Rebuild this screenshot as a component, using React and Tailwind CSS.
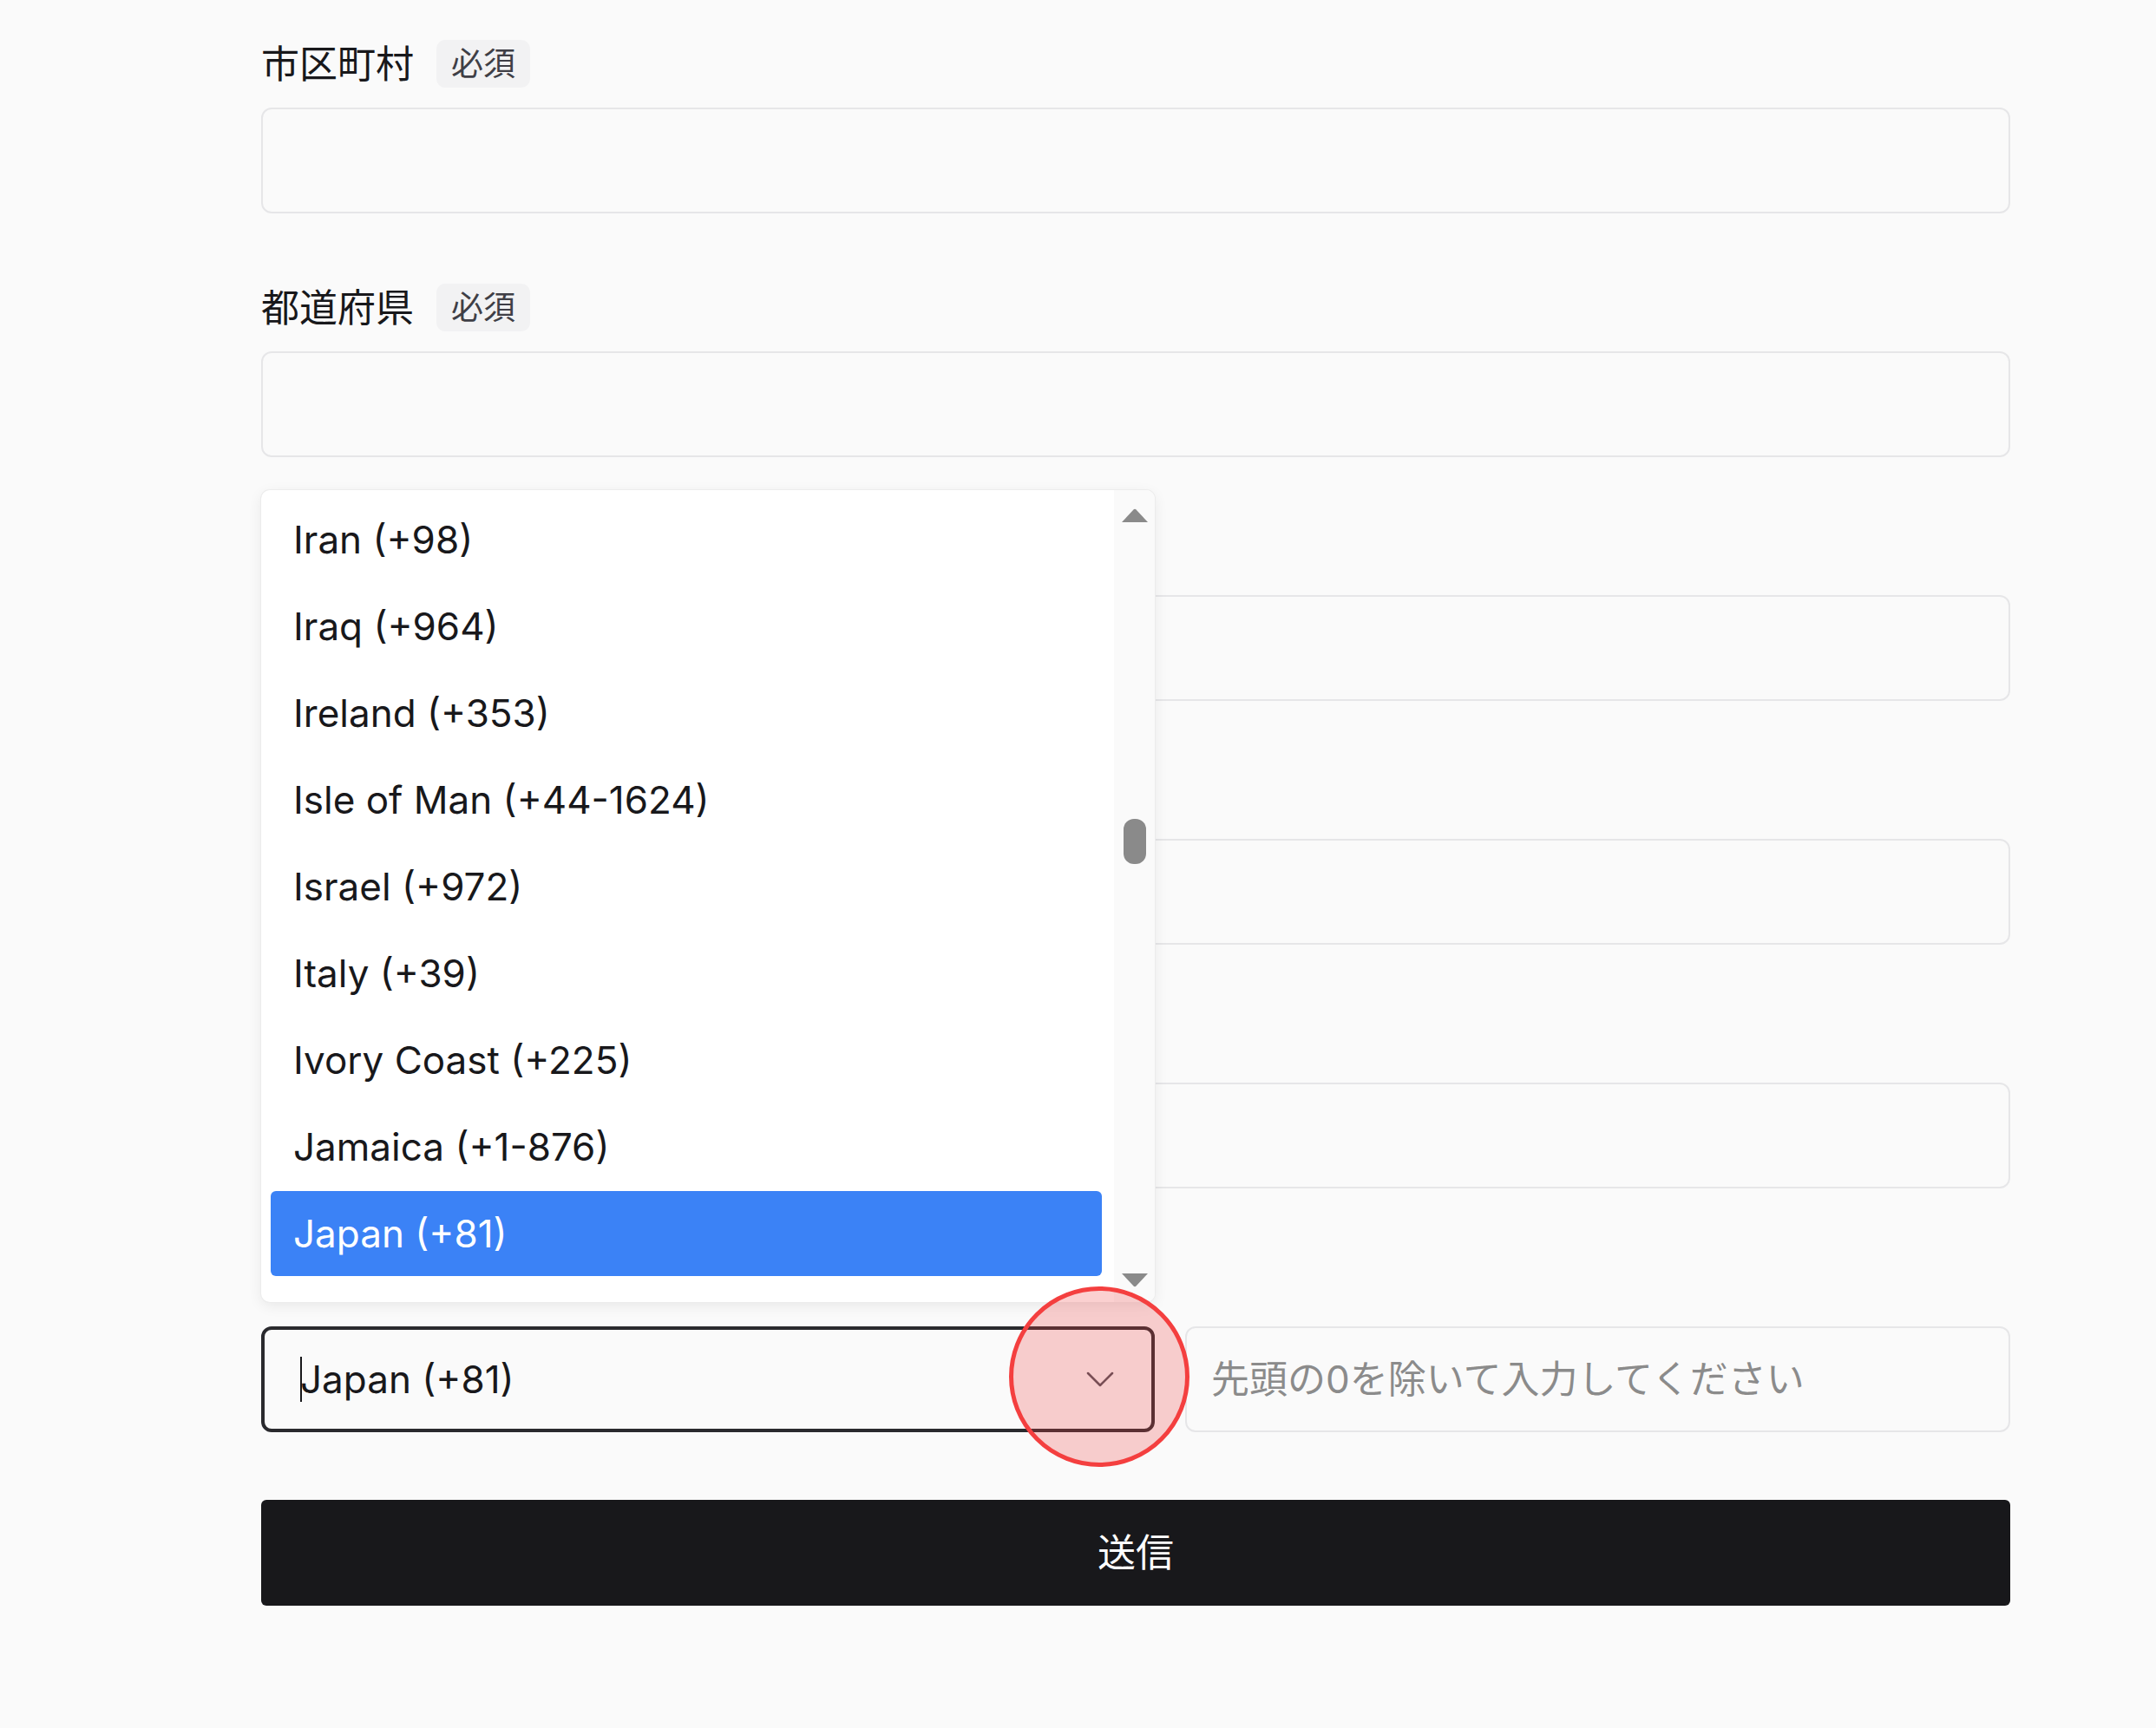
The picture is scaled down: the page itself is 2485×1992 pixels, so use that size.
import React from 'react';
import { ChevronDown } from 'lucide-react';

const fontStack = "font-['Inter','Noto_Sans_CJK_JP',sans-serif]";

const countries = [
  'Iran (+98)',
  'Iraq (+964)',
  'Ireland (+353)',
  'Isle of Man (+44-1624)',
  'Israel (+972)',
  'Italy (+39)',
  'Ivory Coast (+225)',
  'Jamaica (+1-876)',
  'Japan (+81)',
  'Jersey (+44-1534)',
];

const FieldLabel = ({ text }) => (
  <div className="flex items-center gap-[26px] h-[55px]">
    {text && (
      <>
        <span className="text-[44px] leading-none text-[#18181b]">{text}</span>
        <span className="h-[55px] px-[17px] flex items-center rounded-[10px] bg-[#f2f2f3] text-[37px] leading-none text-[#3f3f46]">
          必須
        </span>
      </>
    )}
  </div>
);

// fields whose label sits under the open dropdown get an empty label row
const TextField = ({ label }) => (
  <div className="flex flex-col gap-[23px]">
    <FieldLabel text={label} />
    <input
      type="text"
      className="h-[122px] w-full rounded-[12px] border-2 border-[#e6e6e8] bg-[#fafafa] px-[30px] text-[44px] outline-none"
    />
  </div>
);

const Triangle = ({ down }) => (
  <svg width="32" height="18" viewBox="0 0 32 18">
    {down ? (
      <path d="M1 2 H31 L17.5 16.5 Q16 18 14.5 16.5 Z" fill="#8a8a8a" />
    ) : (
      <path d="M1 16 H31 L17.5 1.5 Q16 0 14.5 1.5 Z" fill="#8a8a8a" />
    )}
  </svg>
);

const CountryDropdown = () => (
  <div className="absolute left-0 bottom-[150px] z-10 w-full h-[936px] flex overflow-hidden rounded-[10px] bg-white shadow-[0_4px_16px_rgba(0,0,0,0.08)] ring-1 ring-[#ececec]">
    <div className="flex-1 flex flex-col pt-[7px] pl-[11px] pr-[14px] overflow-hidden">
      {countries.map((c) => {
        const active = c === 'Japan (+81)';
        return (
          <div key={c} className="h-[100px] shrink-0 py-[1px]">
            <div
              className={
                active
                  ? 'h-full flex items-center px-[26px] rounded-[6px] bg-[#3b82f6] text-white text-[44px]'
                  : 'h-full flex items-center px-[26px] text-[#18181b] text-[44px]'
              }
            >
              {c}
            </div>
          </div>
        );
      })}
    </div>
    <div className="w-[47px] bg-[#fafafa] flex flex-col items-center pt-[21px]">
      <Triangle />
      <div className="mt-[340px] w-[26px] h-[52px] rounded-[12px] bg-[#8a8a8a]" />
      <div className="mt-[470px]">
        <Triangle down />
      </div>
    </div>
  </div>
);

const PhoneField = () => (
  <div className="flex flex-col gap-[23px]">
    <FieldLabel />
    <div className="relative flex gap-[35px]">
      <div className="relative w-[1030px] shrink-0">
        <CountryDropdown />
        <div className="h-[122px] flex items-center justify-between rounded-[12px] border-[4px] border-[#2a2a2e] bg-[#fafafa] pl-[41px] pr-[31px]">
          <span className="flex items-center text-[44px] text-[#18181b]">
            <span className="inline-block w-[2px] h-[52px] bg-[#18181b] -mr-[2px]" />
            Japan (+81)
          </span>
          <ChevronDown size={56} strokeWidth={1.1} color="#52525b" />
        </div>
      </div>
      <input
        type="tel"
        placeholder="先頭の0を除いて入力してください"
        className="flex-1 h-[122px] rounded-[12px] border-2 border-[#e6e6e8] bg-[#fafafa] px-[28px] text-[44px] outline-none placeholder:text-[#8b8b8b]"
      />
      {/* annotation circle */}
      <div className="absolute left-[862px] -top-[46px] z-20 w-[208px] h-[208px] rounded-full border-[5px] border-[#f43f3f] bg-[#f04444]/25 pointer-events-none" />
    </div>
  </div>
);

export default function App() {
  return (
    <div className={`min-h-screen bg-[#fafafa] ${fontStack}`}>
      <form className="ml-[301px] w-[2016px] pt-[46px] pb-[139px] flex flex-col">
        <div className="flex flex-col gap-[81px]">
          <TextField label="市区町村" />
          <TextField label="都道府県" />
          <TextField />
          <TextField />
          <TextField />
          <PhoneField />
        </div>
        <button
          type="button"
          className="mt-[78px] h-[122px] w-full rounded-[6px] bg-[#18181b] text-white text-[44px]"
        >
          送信
        </button>
      </form>
    </div>
  );
}
